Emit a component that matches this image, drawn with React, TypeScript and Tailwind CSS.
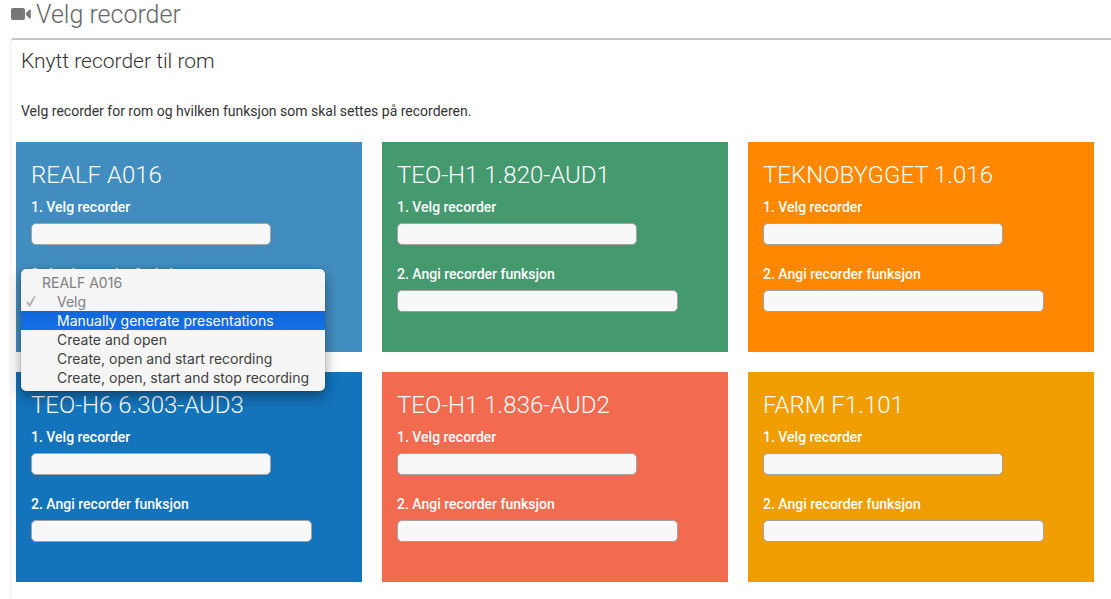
import { useState } from "react";

type Room = { id: string; name: string; color: string };

const rooms: Room[] = [
  { id: "realf-a016", name: "REALF A016", color: "bg-[#428dbf]" },
  { id: "teo-h1-aud1", name: "TEO-H1 1.820-AUD1", color: "bg-[#45996e]" },
  { id: "teknobygget", name: "TEKNOBYGGET 1.016", color: "bg-[#ff8800]" },
  { id: "teo-h6-aud3", name: "TEO-H6 6.303-AUD3", color: "bg-[#1373bb]" },
  { id: "teo-h1-aud2", name: "TEO-H1 1.836-AUD2", color: "bg-[#f26b50]" },
  { id: "farm-f1", name: "FARM F1.101", color: "bg-[#f09d00]" },
];

const functions = [
  "Manually generate presentations",
  "Create and open",
  "Create, open and start recording",
  "Create, open, start and stop recording",
];

const selectClass =
  "block h-[22px] max-w-full appearance-none rounded-[5px] border border-[#a3a3a3] bg-[#f8f8f8] text-sm text-[#333]";

function FunctionMenu({ room }: { room: string }) {
  const [active, setActive] = useState(0);
  return (
    <div
      role="listbox"
      aria-label={room}
      className="absolute top-[127px] left-[5px] z-10 w-[304px] rounded-[5px] bg-[#f5f5f5] pt-1 pb-1 font-['Inter',sans-serif] text-[14px] leading-[19px] text-[#3f3f3f] shadow-[0_5px_14px_rgba(0,0,0,0.4),0_0_1px_rgba(0,0,0,0.5)]"
    >
      <div className="pl-[21px] text-[#808080]">{room}</div>
      <div role="option" aria-selected="true" aria-disabled="true" className="flex items-center text-[#808080]">
        <span className="flex w-9 pl-[5px]">
          <svg viewBox="0 0 10 11" className="h-[11px] w-[10px]" fill="#b0b0b0" aria-hidden="true">
            <path d="M0.2 6.3 1.8 5.2 3.5 7.7 8 0.3 9.8 0.3 4.2 10.5 2.9 10.5Z" />
          </svg>
        </span>
        Velg
      </div>
      {functions.map((name, i) => (
        <button
          key={name}
          type="button"
          role="option"
          aria-selected={false}
          onMouseEnter={() => setActive(i)}
          className={`block w-full pl-9 text-left ${
            i === active ? "bg-linear-to-b from-[#1167d8] to-[#156fe8] text-white" : ""
          }`}
        >
          {name}
        </button>
      ))}
    </div>
  );
}

function RoomCard({ room, open }: { room: Room; open?: boolean }) {
  return (
    <section className={`relative px-[15px] pt-4 pb-10 text-white ${room.color}`}>
      <h3 className="mb-[5px] text-[24px] leading-[34px] font-light whitespace-nowrap">{room.name}</h3>
      <label htmlFor={`${room.id}-recorder`} className="mb-[6px] block text-[14px] leading-5 font-medium">
        1. Velg recorder
      </label>
      <select id={`${room.id}-recorder`} className={`${selectClass} mb-[19px] w-[240px]`}>
        <option value="" />
      </select>
      <label htmlFor={`${room.id}-function`} className="mb-[6px] block text-[14px] leading-5 font-medium">
        2. Angi recorder funksjon
      </label>
      <select id={`${room.id}-function`} className={`${selectClass} w-[281px]`}>
        <option value="" />
      </select>
      {open && <FunctionMenu room={room.name} />}
    </section>
  );
}

export default function App() {
  return (
    <div className="min-h-screen bg-white pl-[11px] font-['Roboto',sans-serif] text-[#333]">
      <h1 className="flex h-[38px] items-start gap-[5px] text-[25px] leading-[30px] font-light text-[#666]">
        <svg viewBox="0 0 20 12" className="mt-2 h-3 w-5 text-[#777]" fill="currentColor" aria-hidden="true">
          <rect x="0" y="0" width="14" height="12" rx="2" />
          <path d="M15 5 18.6 1.6Q19.8 1 19.8 2.2V9.8Q19.8 11 18.6 10.4L15 7Z" />
        </svg>
        Velg recorder
      </h1>
      <main className="min-h-[561px] rounded-tl-[3px] border-t-2 border-[#c3c3c3] bg-white pb-[17px] shadow-[0_1px_1px_1px_rgba(0,0,0,0.06)]">
        <div className="px-[10px] pt-2">
          <h2 className="mb-[27px] text-[21px] leading-[26px] font-light">Knytt recorder til rom</h2>
          <p className="mb-[21px] text-[14px] leading-5">
            Velg recorder for rom og hvilken funksjon som skal settes på recorderen.
          </p>
        </div>
        <div className="grid grid-cols-3 gap-5 pr-[17px] pl-[5px]">
          {rooms.map((room, i) => (
            <RoomCard key={room.id} room={room} open={i === 0} />
          ))}
        </div>
      </main>
    </div>
  );
}
